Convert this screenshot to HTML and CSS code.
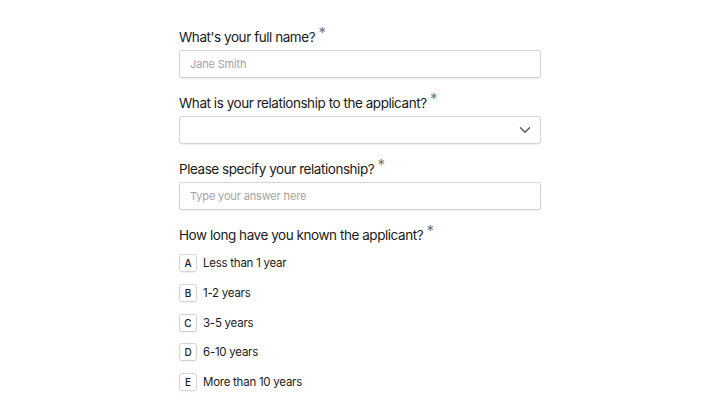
FILE: index.html
```html
<!DOCTYPE html>
<html lang="en">
<head>
    <meta charset="UTF-8">
    <meta name="viewport" content="width=device-width, initial-scale=1.0">
    <title>Reference form</title>
    <link rel="stylesheet" href="styles.css">
</head>
<body>

<div class="form">
    <!-- 이름 -->
    <div class="field">
        <label class="question">What's your full name? <span class="req">*</span></label>
        <input class="text-input" type="text" placeholder="Jane Smith">
    </div>

    <!-- 관계 -->
    <div class="field">
        <label class="question">What is your relationship to the applicant? <span class="req">*</span></label>
        <div class="select">
            <svg class="chevron" width="12" height="8" viewBox="0 0 12 8">
                <path d="M1.5 1.8 L6 6.2 L10.5 1.8" fill="none" stroke="#555" stroke-width="1.4" stroke-linecap="round" stroke-linejoin="round"/>
            </svg>
        </div>
    </div>

    <div class="field">
        <label class="question">Please specify your relationship? <span class="req">*</span></label>
        <input class="text-input" type="text" placeholder="Type your answer here">
    </div>

    <!-- 기간 선택 -->
    <div class="field">
        <label class="question">How long have you known the applicant? <span class="req">*</span></label>
        <div class="options">
            <div class="option"><span class="key">A</span> Less than 1 year</div>
            <div class="option"><span class="key">B</span> 1-2 years</div>
            <div class="option"><span class="key">C</span> 3-5 years</div>
            <div class="option"><span class="key">D</span> 6-10 years</div>
            <div class="option"><span class="key">E</span> More than 10 years</div>
        </div>
    </div>
</div>

</body>
</html>
```

FILE: styles.css
```css
body {
    margin: 0;
    padding: 0;
    font-family: Inter, "Noto Sans", sans-serif;
    background-color: #fff;
    color: #1f1f1f;
}
.form {
    width: 362px;
    margin: 0 auto;
    padding-top: 27px;
}
.field {
    margin-bottom: 15px;
}
.question {
    display: block;
    font-size: 13.5px;
    line-height: 20px;
    font-weight: 400;
    letter-spacing: -0.45px;
    margin-bottom: 3px;
    color: #1a1a1a;
}
.req {
    color: #777;
    font-size: 15px;
    position: relative;
    top: -4px;
}
.text-input, .select {
    display: block;
    width: 100%;
    height: 28px;
    box-sizing: border-box;
    border: 1px solid #d4d4d4;
    border-radius: 3px;
    padding: 0 10px;
    font-family: inherit;
    font-size: 11px;
    letter-spacing: -0.15px;
    color: #222;
    background-color: #fff;
    box-shadow: 0 1px 2px rgba(0, 0, 0, 0.07);
    outline: none;
}
.text-input::placeholder {
    color: #a3a3a3;
}
.select {
    display: flex;
    align-items: center;
    justify-content: flex-end;
    padding-right: 9px;
}
.options {
    display: flex;
    flex-direction: column;
    gap: 11.75px;
    padding-top: 6px;
}
.option {
    display: flex;
    align-items: center;
    gap: 6px;
    height: 18px;
    font-size: 11.5px;
    letter-spacing: -0.25px;
    color: #1a1a1a;
}
.key {
    width: 18px;
    height: 18px;
    box-sizing: border-box;
    border: 1px solid #d4d4d4;
    border-radius: 3px;
    display: flex;
    align-items: center;
    justify-content: center;
    font-size: 10px;
    font-weight: 500;
    letter-spacing: 0;
    box-shadow: 0 1px 2px rgba(0, 0, 0, 0.06);
}
```
